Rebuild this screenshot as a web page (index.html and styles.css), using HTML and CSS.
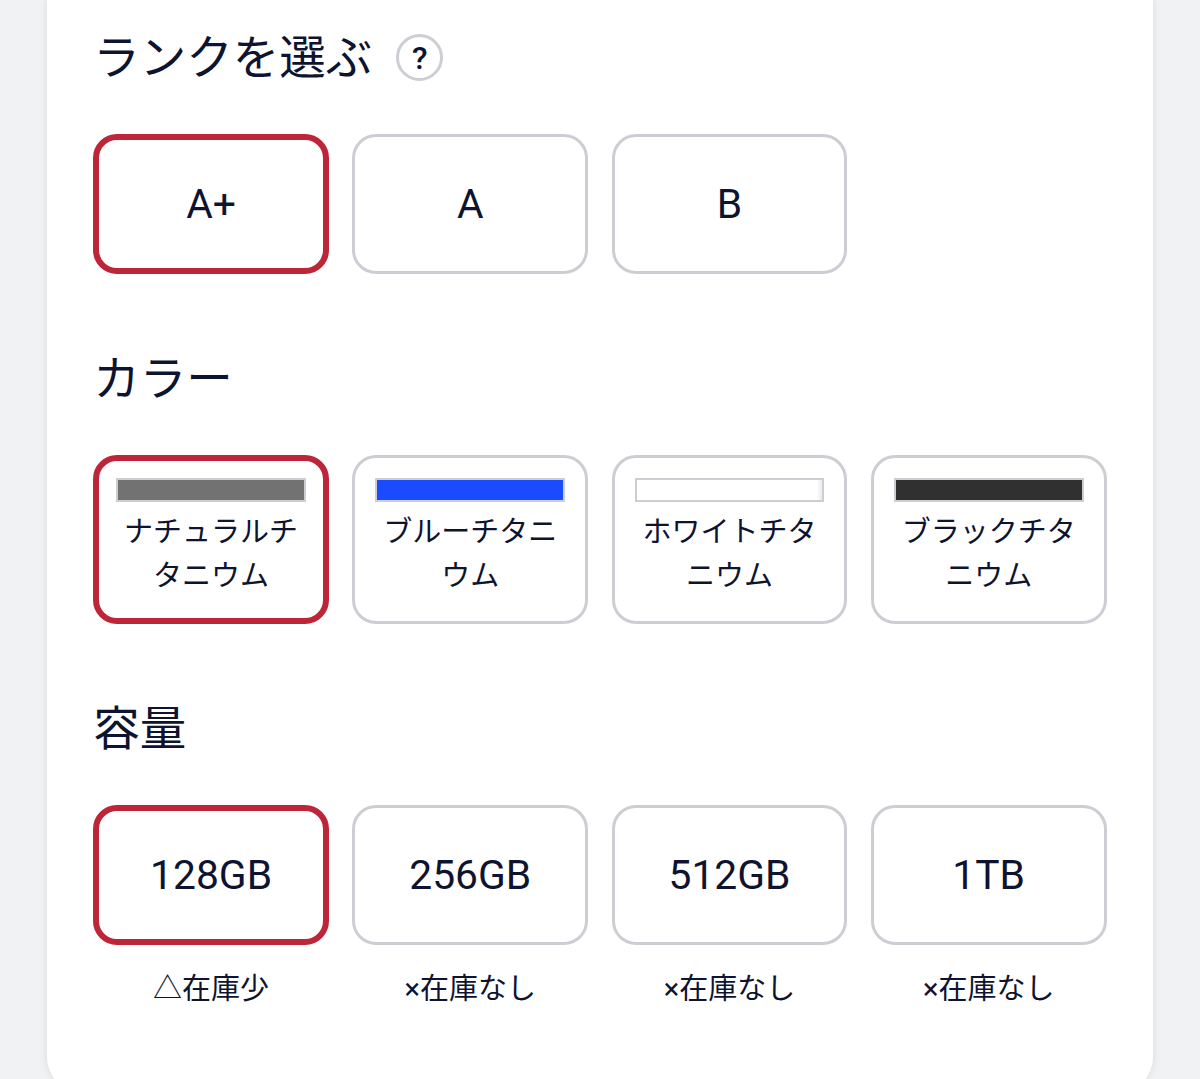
FILE: index.html
```html
<!DOCTYPE html>
<html lang="ja">
<head>
    <meta charset="UTF-8">
    <meta name="viewport" content="width=device-width, initial-scale=1.0">
    <title>商品を選ぶ</title>

    <link rel="stylesheet" href="styles.css">
</head>
<body>

    <main class="card">
      <!-- ランク -->
      <section class="group rank">
        <h2>ランクを選ぶ <button class="help">?</button></h2>
        <div class="options">
          <button class="option is-selected">A+</button>
          <button class="option">A</button>
          <button class="option">B</button>
        </div>
      </section>

      <!-- カラー -->
      <section class="group color">
        <h2>カラー</h2>
        <div class="options">
          <button class="option is-selected"><span class="swatch natural"></span>ナチュラルチタニウム</button>
          <button class="option"><span class="swatch blue"></span>ブルーチタニウム</button>
          <button class="option"><span class="swatch white"></span>ホワイトチタニウム</button>
          <button class="option"><span class="swatch black"></span>ブラックチタニウム</button>
        </div>
      </section>

      <!-- 容量 -->
      <section class="group capacity">
        <h2>容量</h2>
        <div class="options">
          <div class="item">
            <button class="option is-selected">128GB</button>
            <p class="stock">△在庫少</p>
          </div>
          <div class="item">
            <button class="option">256GB</button>
            <p class="stock">×在庫なし</p>
          </div>
          <div class="item">
            <button class="option">512GB</button>
            <p class="stock">×在庫なし</p>
          </div>
          <div class="item">
            <button class="option">1TB</button>
            <p class="stock">×在庫なし</p>
          </div>
        </div>
      </section>
    </main>

</body>
</html>
```

FILE: styles.css
```css
* {
  box-sizing: border-box;
}

html,
body {
  height: 100%;
  overflow: hidden;
}

body {
  margin: 0;
  background: #f1f2f4;
  color: #0e1430;
  font-family: Roboto, "Noto Sans CJK JP", sans-serif;
}

.card {
  width: 1106px;
  height: 1093px;
  margin: 0 auto;
  padding: 22px 46px 0 46.2px;
  background: #fff;
  border-radius: 0 0 36px 36px;
  box-shadow: 0 0 8px rgba(0, 0, 0, 0.1);
}

h2 {
  display: flex;
  align-items: center;
  gap: 24px;
  height: 71px;
  margin: 0 0 41px;
  padding-top: 2px;
  font-size: 46.5px;
  font-weight: 400;
  line-height: 71px;
}

.rank {
  height: 321px;
}

.color {
  height: 350px;
}

.help {
  width: 47px;
  height: 47px;
  margin: -2px 0 0;
  padding: 0;
  border: 3px solid #cdced3;
  border-radius: 50%;
  background: #fff;
  color: inherit;
  font: 500 32px/42px Roboto, sans-serif;
}

.options {
  display: grid;
  grid-template-columns: repeat(4, 235.8px);
  gap: 23.4px;
}

.option {
  display: block;
  width: 100%;
  height: 140px;
  padding: 0;
  border: 3px solid #cdced3;
  border-radius: 24px;
  background: #fff;
  color: inherit;
  font-family: inherit;
  font-size: 40.8px;
  line-height: 48px;
  text-align: center;
}

.option.is-selected {
  border: 6px solid #bd2538;
}

.color .option {
  height: 169px;
  padding: 0 20px 3px;
  font-size: 29px;
  line-height: 43.4px;
}

.color .option.is-selected {
  padding: 0 17px 3px;
}

.swatch {
  display: block;
  height: 24px;
  margin-bottom: 9px;
  border: 2px solid #cdced3;
}

.natural {
  background: #737272;
}

.blue {
  background: #1a4bff;
}

.white {
  background: linear-gradient(to right, #fff 97%, #e9eaec);
}

.black {
  background: #303030;
}

.stock {
  margin: 23px 0 0;
  font-size: 29px;
  line-height: 43px;
  text-align: center;
}
```
